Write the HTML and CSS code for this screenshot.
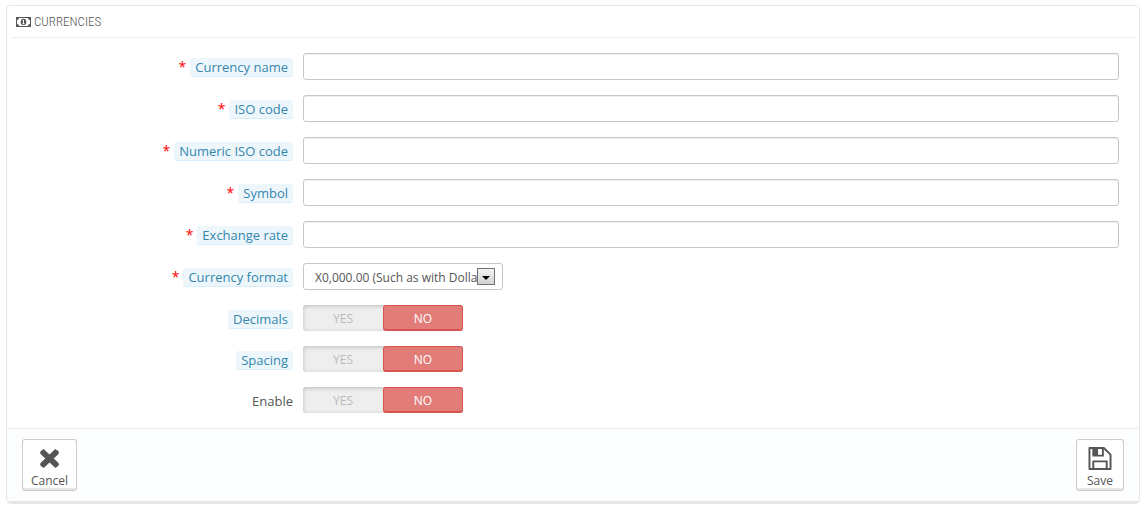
FILE: index.html
```html
<!DOCTYPE html>
<html lang="en">
<head>
    <meta charset="utf-8">
    <title>Currencies</title>
    <link rel="stylesheet" href="styles.css">
</head>
<body>
    <form class="panel">
        <h3 class="panel-heading">
            <svg class="icon-money" viewBox="0 0 15 10" width="15" height="10" aria-hidden="true">
                <path fill-rule="evenodd" d="M0 0h15v10H0zM3 1a2 2 0 0 1-2 2v4a2 2 0 0 1 2 2h9a2 2 0 0 1 2-2V3a2 2 0 0 1-2-2z"/>
                <ellipse cx="7.500" cy="5" rx="2.800" ry="3.300"/>
                <path fill="#fff" d="M6.500 3h1.500v3.500h.8v.8H6.200v-.8H7V4h-.5z"/>
            </svg>
            Currencies
        </h3>

        <div class="form-wrapper">
            <div class="form-group">
                <label class="required" for="name"><span class="label-tooltip">Currency name</span></label>
                <input type="text" id="name">
            </div>
            <div class="form-group">
                <label class="required" for="iso_code"><span class="label-tooltip">ISO code</span></label>
                <input type="text" id="iso_code">
            </div>
            <div class="form-group">
                <label class="required" for="iso_code_num"><span class="label-tooltip">Numeric ISO code</span></label>
                <input type="text" id="iso_code_num">
            </div>
            <div class="form-group">
                <label class="required" for="sign"><span class="label-tooltip">Symbol</span></label>
                <input type="text" id="sign">
            </div>
            <div class="form-group">
                <label class="required" for="conversion_rate"><span class="label-tooltip">Exchange rate</span></label>
                <input type="text" id="conversion_rate">
            </div>
            <div class="form-group">
                <label class="required" for="format"><span class="label-tooltip">Currency format</span></label>
                <div class="select">
                    <select id="format">
                        <option>X0,000.00 (Such as with Dollars)</option>
                        <option>0 000,00X (Such as with Euros)</option>
                    </select>
                    <span class="select-arrow"></span>
                </div>
            </div>

            <div class="form-group">
                <span class="group-label" id="decimals"><span class="label-tooltip">Decimals</span></span>
                <div class="switch" role="radiogroup" aria-labelledby="decimals">
                    <input type="radio" name="decimals" id="decimals_on">
                    <label for="decimals_on">YES</label>
                    <input type="radio" name="decimals" id="decimals_off" checked>
                    <label for="decimals_off">NO</label>
                </div>
            </div>
            <div class="form-group">
                <span class="group-label" id="spacing"><span class="label-tooltip">Spacing</span></span>
                <div class="switch" role="radiogroup" aria-labelledby="spacing">
                    <input type="radio" name="spacing" id="spacing_on">
                    <label for="spacing_on">YES</label>
                    <input type="radio" name="spacing" id="spacing_off" checked>
                    <label for="spacing_off">NO</label>
                </div>
            </div>
            <div class="form-group">
                <span class="group-label" id="enable">Enable</span>
                <div class="switch" role="radiogroup" aria-labelledby="enable">
                    <input type="radio" name="active" id="active_on">
                    <label for="active_on">YES</label>
                    <input type="radio" name="active" id="active_off" checked>
                    <label for="active_off">NO</label>
                </div>
            </div>
        </div>

        <div class="panel-footer">
            <button type="button" class="btn">
                <svg viewBox="0 0 24 24" width="24" height="24" aria-hidden="true">
                    <path d="M5.500 6l12 12M17.500 6l-12 12" stroke="#555" stroke-width="5.500" stroke-linecap="square"/>
                    <path d="M5 6l13 12M18 6l-13 12" stroke="#555" stroke-width="6" stroke-linecap="round"/>
                </svg>
                Cancel
            </button>
            <button type="submit" class="btn">
                <svg viewBox="0 0 24 24" width="24" height="24" aria-hidden="true">
                    <path d="M1 1h15l7 7v15H1zM5 23v-8h14v8" fill="none" stroke="#555" stroke-width="2" stroke-linejoin="round"/>
                    <path fill-rule="evenodd" d="M4 1h12v9H4zM10 2v6h4V2z"/>
                </svg>
                Save
            </button>
        </div>
    </form>
</body>
</html>
```

FILE: styles.css
```css
* {
    box-sizing: border-box;
}
body {
    margin: 5px 4px 5px 6px;
    background: #fff;
    color: #555;
    font: 13px/18px "Open Sans", sans-serif;
}
.panel {
    border: 1px solid #e6e6e6;
    border-bottom-width: 3px;
    border-radius: 5px;
}
.panel-heading {
    display: flex;
    align-items: center;
    gap: 3px;
    height: 32px;
    margin: 0 4px;
    padding: 0 5px;
    border-bottom: 1px solid #eee;
    font: 300 13px/20px "Ubuntu Condensed", "Roboto Condensed", "Open Sans Condensed", Roboto, sans-serif;
    text-transform: uppercase;
}
svg {
    fill: #555;
}

/* form rows */
.form-wrapper {
    display: grid;
    gap: 15px;
    padding: 15px 20px 15px 14px;
}
.form-group {
    display: grid;
    grid-template-columns: minmax(0, 1fr) minmax(0, 3fr);
    gap: 10px;
    align-items: center;
}
.form-group > label,
.group-label {
    padding-top: 2px;
    text-align: right;
}
.required::before {
    content: "*";
    margin-right: 4px;
    color: #f00;
    font-size: 14px;
}
.label-tooltip {
    display: inline-block;
    padding: 0 5px;
    border-bottom: 1px solid #d8eef8;
    border-radius: 3px;
    background: #edf7fb;
    color: #3586ae;
}
input[type="text"],
select {
    width: 100%;
    height: 27px;
    padding: 0 8px;
    border: 1px solid #c7c7c7;
    border-radius: 3px;
    background: #fff;
    box-shadow: inset 0 1px 1px #eee;
    color: #555;
    font: 12px/18px "Open Sans", sans-serif;
}
.select {
    position: relative;
    width: 200px;
    height: 27px;
}
select {
    appearance: none;
    padding: 2px 24px 0 11px;
    box-shadow: none;
}
.select-arrow {
    position: absolute;
    top: 5px;
    right: 8px;
    width: 18px;
    height: 17px;
    border: 1px solid #707070;
    background: linear-gradient(#f4f4f4, #d2d2d2);
    pointer-events: none;
}
.select-arrow::after {
    content: "";
    position: absolute;
    top: 7px;
    left: 4px;
    border: 4px solid transparent;
    border-top-color: #000;
    border-bottom: 0;
}

/* yes / no switch */
.switch {
    display: flex;
    width: 160px;
    height: 26px;
    border-radius: 3px;
    background: #eee;
    box-shadow: inset 0 1px 4px #bbb;
}
.switch input {
    position: absolute;
    opacity: 0;
}
.switch label {
    flex: 1;
    border: 1px solid transparent;
    border-radius: 3px;
    color: #bbb;
    font-size: 12px;
    line-height: 25px;
    text-align: center;
}
.switch input:checked + label {
    border-color: #d9534f;
    border-bottom-width: 2px;
    background: #e27c79;
    color: #fff;
}

/* footer */
.panel-footer {
    display: flex;
    justify-content: space-between;
    padding: 10px 15px;
    border-top: 1px solid #eee;
    background: #fcfdfe;
}
.btn {
    display: flex;
    flex-direction: column;
    align-items: center;
    gap: 2px;
    height: 52px;
    padding: 7px 8px 0;
    border: 1px solid #ccc;
    border-bottom-color: #c7c7c7;
    border-radius: 3px;
    background: #fff;
    box-shadow: inset 0 -2px 0 #e8e8e8;
    color: #555;
    font: 12px/18px "Open Sans", sans-serif;
}
.btn:last-child {
    padding: 7px 10px 0;
}
```
